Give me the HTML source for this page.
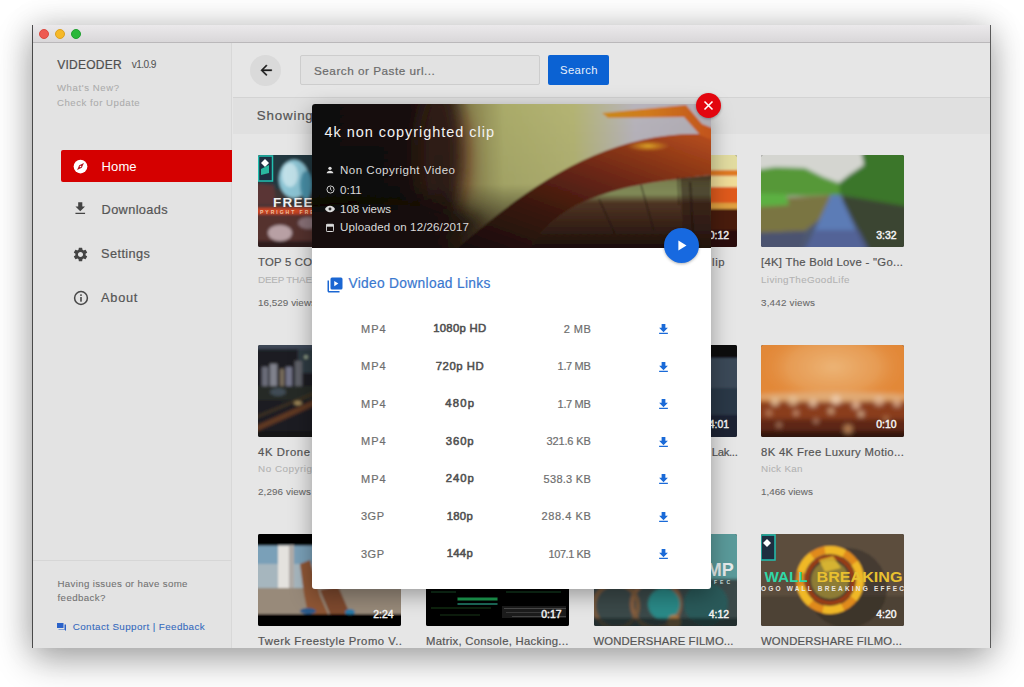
<!DOCTYPE html>
<html><head><meta charset="utf-8">
<style>
*{margin:0;padding:0;box-sizing:border-box}
html,body{width:1024px;height:687px;overflow:hidden;background:#fff;font-family:"Liberation Sans",sans-serif;position:relative}
div,svg{position:absolute}
.t{white-space:pre;line-height:1;-webkit-text-stroke:.2px currentColor}
.th{border-radius:2px;overflow:hidden;width:143px;height:92px}
</style></head><body>
<!-- window shadow -->
<div style="left:32px;top:25px;width:959px;height:623px;box-shadow:0 12px 34px rgba(0,0,0,.32),0 0 30px rgba(0,0,0,.14)"></div>
<!-- window base -->
<div style="left:32px;top:25px;width:959px;height:623px;background:#e6e6e6"></div>
<!-- title bar -->
<div style="left:32px;top:25px;width:959px;height:18px;background:linear-gradient(#ebe9eb,#d9d7d9);border-bottom:1px solid #bab8ba"></div>
<div style="left:38.8px;top:29.2px;width:10px;height:10px;border-radius:50%;background:#ee5a52;border:1px solid #dc4a40"></div>
<div style="left:54.8px;top:29.2px;width:10px;height:10px;border-radius:50%;background:#f6b928;border:1px solid #dca020"></div>
<div style="left:70.9px;top:29.2px;width:10px;height:10px;border-radius:50%;background:#2ab83a;border:1px solid #20a030"></div>
<div style="left:32px;top:25px;width:1px;height:623px;background:#4a4a4a"></div>
<div style="left:990px;top:25px;width:1px;height:623px;background:#5a5a5a"></div>

<!-- sidebar -->
<div style="left:33px;top:43px;width:199px;height:605px;background:#e3e3e3;border-right:1px solid #d8d8d8"></div>
<div style="left:33px;top:560px;width:198px;height:1px;background:#d6d6d6"></div>
<div style="left:61px;top:150px;width:171px;height:32px;background:#d50000;border-radius:2px 0 0 2px"></div>
<!-- nav icons -->
<svg style="left:73px;top:159px" width="15" height="15" viewBox="0 0 24 24"><circle cx="12" cy="12" r="11" fill="#fff"/><path d="M17.5 6.5 L14 14 L6.5 17.5 L10 10Z" fill="#b0101a"/><circle cx="12" cy="12" r="1.3" fill="#fff"/></svg>
<svg style="left:72.3px;top:199.5px" width="16.5" height="17" viewBox="0 0 24 24"><path d="M19 9h-4V3H9v6H5l7 7 7-7zM5 18v2h14v-2H5z" fill="#444"/></svg>
<svg style="left:72px;top:245.8px" width="17" height="17" viewBox="0 0 24 24"><path fill="#444" d="M19.14 12.94c.04-.3.06-.61.06-.94 0-.32-.02-.64-.07-.94l2.03-1.58a.49.49 0 0 0 .12-.61l-1.92-3.32a.488.488 0 0 0-.59-.22l-2.39.96c-.5-.38-1.03-.7-1.62-.94l-.36-2.54a.484.484 0 0 0-.48-.41h-3.84c-.24 0-.43.17-.47.41l-.36 2.54c-.59.24-1.13.57-1.62.94l-2.39-.96c-.22-.08-.47 0-.59.22L2.74 8.87c-.12.21-.08.47.12.61l2.03 1.58c-.05.3-.09.63-.09.94s.02.64.07.94l-2.03 1.58a.49.49 0 0 0-.12.61l1.92 3.32c.12.22.37.29.59.22l2.39-.96c.5.38 1.03.7 1.62.94l.36 2.54c.05.24.24.41.48.41h3.84c.24 0 .44-.17.47-.41l.36-2.54c.59-.24 1.13-.56 1.62-.94l2.39.96c.22.08.47 0 .59-.22l1.92-3.32c.12-.22.07-.47-.12-.61l-2.01-1.58zM12 15.6c-1.98 0-3.6-1.62-3.6-3.6s1.62-3.6 3.6-3.6 3.6 1.62 3.6 3.6-1.62 3.6-3.6 3.6z"/></svg>
<svg style="left:72.5px;top:290.3px" width="16" height="16" viewBox="0 0 24 24"><circle cx="12" cy="12" r="9.6" fill="none" stroke="#484848" stroke-width="2.3"/><rect x="10.8" y="10.5" width="2.4" height="7" fill="#484848"/><rect x="10.8" y="6.5" width="2.4" height="2.4" fill="#484848"/></svg>
<svg style="left:57px;top:623px" width="9" height="8" viewBox="0 0 18 16"><rect x="0" y="0" width="13" height="10" fill="#2a62c9"/><path d="M3 12h12V3h3v13l-3-3H3z" fill="#2a62c9"/></svg>

<!-- main header -->
<div style="left:233px;top:97px;width:757px;height:1px;background:#d3d3d3"></div>
<div style="left:233px;top:98px;width:757px;height:36px;background:#e0e0e0"></div>
<div style="left:250px;top:55px;width:31px;height:31px;border-radius:50%;background:#dadada"></div>
<svg style="left:257.8px;top:61.6px" width="16.5" height="16.5" viewBox="0 0 24 24"><path d="M20 11H7.83l5.59-5.59L12 4l-8 8 8 8 1.41-1.41L7.83 13H20v-2z" fill="#1e1e1e" stroke="#1e1e1e" stroke-width=".5"/></svg>
<div style="left:300px;top:55px;width:240px;height:30px;background:#e2e2e2;border:1px solid #cdcdcd;border-radius:2px"></div>
<div style="left:548px;top:55px;width:61px;height:30px;background:#0b62d3;border-radius:2px"></div>

<!-- thumbnails -->
<div class="th" style="left:258px;top:155px;background:#222"><svg style="left:0;top:0" width="143" height="92" viewBox="0 0 143 92"><defs><filter id="F0" x="-10%" y="-10%" width="120%" height="120%"><feGaussianBlur stdDeviation="1.6"/></filter></defs><g filter="url(#F0)">
<rect x="-5" y="-5" width="153" height="102" fill="#243840"/>
<rect x="-5" y="34" width="153" height="20" fill="#3a3436"/>
<rect x="-5" y="56" width="153" height="40" fill="#54302e"/>
<path d="M-5 28 L16 30 L18 50 L-5 50Z" fill="#5a3434"/>
<ellipse cx="36" cy="24" rx="15" ry="19" fill="#8cc4d4"/>
<ellipse cx="32" cy="20" rx="8" ry="12" fill="#c0e0e8"/>
<ellipse cx="48" cy="30" rx="6" ry="14" fill="#4a90a8"/>
<ellipse cx="22" cy="78" rx="12" ry="8" fill="#b8a0a4"/>
<ellipse cx="50" cy="68" rx="10" ry="6" fill="#8a7278"/>
<rect x="-5" y="53" width="153" height="6" fill="#cc4424"/>
<rect x="-5" y="86" width="153" height="10" fill="#2e1c1c"/>
</g><rect x="0.5" y="1" width="14" height="25" fill="#1e2e40" stroke="#22c0b0" stroke-width="1.5"/>
<path d="M3 8 L7 4 L11 8 L7 12Z" fill="#fff"/><path d="M3 14 L11 10 L11 18 L3 20Z" fill="#2ab8a0"/>
<text x="15" y="52" font-family="Liberation Sans" font-weight="700" font-size="13.5" fill="#f0f0f0" letter-spacing="1.2">FREE</text>
<text x="2" y="58.5" font-family="Liberation Sans" font-weight="700" font-size="5" fill="#f0c0a0" letter-spacing="2">PYRIGHT FREE</text></svg></div>
<div class="th" style="left:593.5px;top:155px;background:#222"><svg style="left:0;top:0" width="143" height="92" viewBox="0 0 143 92"><defs><filter id="F1" x="-10%" y="-10%" width="120%" height="120%"><feGaussianBlur stdDeviation="0.8"/></filter></defs><g filter="url(#F1)">
<rect x="-5" y="-5" width="153" height="102" fill="#3a1a0e"/>
<rect x="-5" y="-5" width="153" height="20" fill="#e2dca0"/>
<rect x="-5" y="15" width="153" height="6" fill="#e07a20"/>
<rect x="-5" y="21" width="153" height="11" fill="#f0dc98"/>
<rect x="-5" y="32" width="153" height="16" fill="#e05a1c"/>
<rect x="-5" y="48" width="153" height="6" fill="#e0a040"/>
<rect x="-5" y="54" width="153" height="40" fill="#4a1e10"/>
<rect x="-5" y="75" width="153" height="20" fill="#2a1008"/>
</g></svg></div>
<div class="th" style="left:761px;top:155px;background:#222"><svg style="left:0;top:0" width="143" height="92" viewBox="0 0 143 92"><defs><filter id="F2" x="-10%" y="-10%" width="120%" height="120%"><feGaussianBlur stdDeviation="2.0"/></filter></defs><g filter="url(#F2)">
<rect x="-5" y="-5" width="153" height="102" fill="#4e5872"/>
<rect x="-5" y="-5" width="153" height="50" fill="#d4d5d0"/>
<path d="M-5 15 L14 12 L44 13 L62 22 L78 28 L80 40 L-5 42Z" fill="#569838"/>
<path d="M100 -5 L150 -5 L150 54 L79 40 L78 28 L88 20 L103 10Z" fill="#3a762a"/>
<path d="M-5 44 L70 40 L62 62 L44 76 L-5 78Z" fill="#7a7442"/>
<path d="M-5 38 L25 39 L28 50 L-5 52Z" fill="#5cb042"/>
<path d="M70 40 L79 40 L104 96 L44 96Z" fill="#5c7cb6"/>
<path d="M55 75 L100 75 L108 96 L40 96Z" fill="#4e5a8a" opacity=".7"/>
<path d="M79 40 L150 52 L150 96 L109 96Z" fill="#3a4430"/>
<path d="M-5 78 L44 76 L38 96 L-5 96Z" fill="#4c5270"/>
</g></svg></div>
<div class="th" style="left:258px;top:344.5px;background:#222"><svg style="left:0;top:0" width="143" height="92" viewBox="0 0 143 92"><defs><filter id="F3" x="-10%" y="-10%" width="120%" height="120%"><feGaussianBlur stdDeviation="1.4"/></filter></defs><g filter="url(#F3)">
<rect x="-5" y="-5" width="153" height="102" fill="#1c1e22"/>
<rect x="-5" y="-5" width="153" height="9" fill="#3e4656"/>
<rect x="40" y="4" width="18" height="24" fill="#2e3a42"/>
<circle cx="48" cy="12" r="1.5" fill="#c0d0b0"/>
<rect x="4" y="22" width="6" height="19" fill="#6a6c78"/>
<rect x="12" y="19" width="7" height="22" fill="#80828c"/>
<rect x="22" y="24" width="4" height="17" fill="#7a6e5e"/>
<rect x="28" y="22" width="6" height="19" fill="#74768a"/>
<rect x="37" y="16" width="7" height="25" fill="#5e6068"/>
<rect x="-5" y="41" width="153" height="14" fill="#262c26"/>
<ellipse cx="20" cy="47" rx="8" ry="4" fill="#4a5a6a" opacity=".7"/>
<path d="M-5 82 L58 54 L58 60 L-5 88Z" fill="#5e3820"/>
<path d="M-5 72 L58 46 L58 49 L-5 75Z" fill="#3e3224"/>
<ellipse cx="40" cy="58" rx="4" ry="2" fill="#a08858"/>
<rect x="-5" y="86" width="153" height="10" fill="#141414"/>
</g></svg></div>
<div class="th" style="left:593.5px;top:344.5px;background:#222"><svg style="left:0;top:0" width="143" height="92" viewBox="0 0 143 92"><defs><filter id="F4" x="-10%" y="-10%" width="120%" height="120%"><feGaussianBlur stdDeviation="0.8"/></filter></defs><g filter="url(#F4)">
<rect x="-5" y="-5" width="153" height="102" fill="#2c3846"/>
<rect x="-5" y="-5" width="153" height="18" fill="#0a0a0a"/>
<rect x="-5" y="13" width="153" height="30" fill="#3a4858"/>
<rect x="-5" y="70" width="153" height="26" fill="#1c2430"/>
</g></svg></div>
<div class="th" style="left:761px;top:344.5px;background:#222"><svg style="left:0;top:0" width="143" height="92" viewBox="0 0 143 92"><defs><filter id="F5" x="-10%" y="-10%" width="120%" height="120%"><feGaussianBlur stdDeviation="2.4"/></filter></defs><g filter="url(#F5)">
<rect x="-5" y="-5" width="153" height="102" fill="#e28838"/>
<radialGradient id="bkg"><stop offset="0" stop-color="#ecb476"/><stop offset=".6" stop-color="#e8a460" stop-opacity=".7"/><stop offset="1" stop-color="#e28838" stop-opacity="0"/></radialGradient><ellipse cx="72" cy="22" rx="75" ry="42" fill="url(#bkg)"/>
<rect x="-5" y="56" width="153" height="45" fill="#8a3e1c"/>
<rect x="-5" y="74" width="153" height="28" fill="#5e2814"/>
<rect x="-5" y="86" width="153" height="12" fill="#2e140c"/>
<ellipse cx="72" cy="52" rx="78" ry="5" fill="#e0b080" opacity=".8"/>
<circle cx="14" cy="57" r="4" fill="#e8c8a0" opacity=".8"/>
<circle cx="32" cy="56" r="5" fill="#e8c8a0" opacity=".7"/>
<circle cx="52" cy="58" r="4" fill="#e8c8a8" opacity=".8"/>
<circle cx="75" cy="55" r="5" fill="#f0d0b0" opacity=".8"/>
<circle cx="95" cy="60" r="4" fill="#e8c0a0" opacity=".8"/>
<circle cx="118" cy="56" r="5" fill="#e8c0a0" opacity=".7"/>
<circle cx="136" cy="58" r="4" fill="#e8c0a0" opacity=".7"/>
<circle cx="35" cy="68" r="2.5" fill="#e0b090" opacity=".8"/>
<circle cx="100" cy="69" r="3" fill="#e0c0a0" opacity=".8"/>
<circle cx="87" cy="84" r="4.5" fill="#c89060" opacity=".8"/>
<circle cx="18" cy="80" r="2.5" fill="#d0a080" opacity=".7"/>
<circle cx="55" cy="76" r="2.5" fill="#d0a080" opacity=".7"/>
<circle cx="125" cy="74" r="3" fill="#c89060" opacity=".6"/>
<circle cx="70" cy="66" r="3" fill="#e8c8a0" opacity=".7"/>
<circle cx="8" cy="68" r="3" fill="#d8a880" opacity=".6"/>
</g></svg></div>
<div class="th" style="left:258px;top:534px;background:#222"><svg style="left:0;top:0" width="143" height="92" viewBox="0 0 143 92"><defs><filter id="F6" x="-10%" y="-10%" width="120%" height="120%"><feGaussianBlur stdDeviation="1.0"/></filter></defs><g filter="url(#F6)">
<rect x="-5" y="-5" width="153" height="102" fill="#000"/>
<rect x="-5" y="11.5" width="153" height="44" fill="#7aa0b8"/>
<rect x="-5" y="30" width="153" height="25" fill="#a6b6be"/>
<rect x="20" y="11.5" width="16" height="48" fill="#e4e2de"/>
<rect x="31" y="11.5" width="5" height="48" fill="#b0aca8"/>
<rect x="-5" y="54" width="153" height="26" fill="#988a7a"/>
<path d="M42 30 L52 26 L62 62 L70 80 L50 80 L46 60Z" fill="#8e5634"/>
<path d="M62 56 L80 52 L92 80 L72 80Z" fill="#7e4a2e"/>
<ellipse cx="50" cy="77" rx="8" ry="3" fill="#2a5a8a"/>
<ellipse cx="92" cy="78" rx="5" ry="3" fill="#2a7aa8"/>
<rect x="-5" y="80.5" width="153" height="16" fill="#000"/>
</g></svg></div>
<div class="th" style="left:426px;top:534px;background:#222"><svg style="left:0;top:0" width="143" height="92" viewBox="0 0 143 92"><defs><filter id="F7" x="-10%" y="-10%" width="120%" height="120%"><feGaussianBlur stdDeviation="0.4"/></filter></defs><g filter="url(#F7)">
<rect x="-5" y="-5" width="153" height="102" fill="#030503"/>
<rect x="31.5" y="63.5" width="40" height="3" fill="#1e9a50"/>
<rect x="31.5" y="69" width="40" height="2" fill="#1a6a58"/>
<rect x="5" y="57" width="25" height="2" fill="#0e2a14"/>
<rect x="80" y="57" width="55" height="2" fill="#0e2a14"/>
<rect x="5" y="73" width="60" height="2" fill="#0c2210"/>
<rect x="76" y="72" width="64" height="12" fill="#1c1c1c"/><rect x="78" y="74" width="62" height="1" fill="#4a4a4a"/>
<rect x="80" y="78" width="50" height="1" fill="#3a3a3a"/>
<rect x="86" y="82" width="54" height="1" fill="#444"/>
<rect x="14" y="80" width="40" height="2" fill="#0c1e10"/>
</g></svg></div>
<div class="th" style="left:593.5px;top:534px;background:#222"><svg style="left:0;top:0" width="143" height="92" viewBox="0 0 143 92"><defs><filter id="F8" x="-10%" y="-10%" width="120%" height="120%"><feGaussianBlur stdDeviation="1.8"/></filter></defs><g filter="url(#F8)">
<rect x="-5" y="-5" width="153" height="102" fill="#3a4848"/>
<rect x="115" y="-5" width="35" height="50" fill="#5a9a9a"/>
<circle cx="62" cy="70" r="24" fill="none" stroke="#8a6040" stroke-width="4"/>
<circle cx="70" cy="70" r="16" fill="#2a8a88"/>
<circle cx="22" cy="72" r="22" fill="none" stroke="#7a5a3a" stroke-width="4"/>
<circle cx="112" cy="70" r="22" fill="#2a5a5a"/>
<circle cx="80" cy="88" r="7" fill="#b07a40"/>
<rect x="-5" y="84" width="153" height="12" fill="#1a2222" opacity=".7"/>
</g><text x="139.8" y="42" text-anchor="end" font-family="Liberation Sans" font-weight="700" font-size="18" fill="#e6ecec">MP</text><text x="139" y="50" text-anchor="end" font-family="Liberation Sans" font-weight="700" font-size="5" fill="#d0e0e0" letter-spacing="3">FEC</text></svg></div>
<div class="th" style="left:761px;top:534px;background:#222"><svg style="left:0;top:0" width="143" height="92" viewBox="0 0 143 92"><defs><filter id="F9" x="-10%" y="-10%" width="120%" height="120%"><feGaussianBlur stdDeviation="1.2"/></filter></defs><g filter="url(#F9)">
<rect x="-5" y="-5" width="153" height="102" fill="#5c4e3e"/>
<rect x="-5" y="62" width="153" height="40" fill="#4e4234"/>
<ellipse cx="86" cy="54" rx="40" ry="40" fill="#2e2822" opacity=".5"/>
<circle cx="69" cy="46" r="30" fill="none" stroke="#e08a1e" stroke-width="8"/>
<circle cx="69" cy="46" r="30" fill="none" stroke="#f0b828" stroke-width="8" stroke-dasharray="20 14"/>
<circle cx="69" cy="46" r="23" fill="none" stroke="#9a3e16" stroke-width="4"/>
<circle cx="69" cy="46" r="19" fill="#8e7c36"/>
<path d="M58 26 L72 22 L80 34 L64 38Z" fill="#e8c030" opacity=".8"/>
</g><rect x="0" y="1" width="14" height="25" fill="#1e2e40" stroke="#22c0b0" stroke-width="1.5"/>
<path d="M2 9 L6 5 L10 9 L6 13Z" fill="#fff"/>
<text x="3.5" y="48" font-family="Liberation Sans" font-weight="700" font-size="14.5" fill="#30d8a8" textLength="43" lengthAdjust="spacingAndGlyphs">WALL</text>
<text x="55.5" y="48" font-family="Liberation Sans" font-weight="700" font-size="14.5" fill="#e8c030" textLength="86" lengthAdjust="spacingAndGlyphs">BREAKING</text>
<text x="0" y="56.5" font-family="Liberation Sans" font-weight="700" font-size="6.5" fill="#e8e4e0" textLength="143" lengthAdjust="spacing">OGO WALL BREAKING EFFEC</text></svg></div>


<div class="t" style="left:57.30px;top:58.57px;font-size:12.03px;color:#4f4f4f;letter-spacing:0.233px">VIDEODER</div>
<div class="t" style="left:131.80px;top:60.38px;font-size:10.14px;color:#555;letter-spacing:-0.619px;-webkit-text-stroke:.08px currentColor">v1.0.9</div>
<div class="t" style="left:57.00px;top:83.47px;font-size:9.57px;color:#acacac;letter-spacing:0.597px;-webkit-text-stroke:.08px currentColor">What&#x27;s New?</div>
<div class="t" style="left:57.00px;top:97.57px;font-size:9.57px;color:#acacac;letter-spacing:0.552px;-webkit-text-stroke:.08px currentColor">Check for Update</div>
<div class="t" style="left:101.60px;top:159.72px;font-size:13.04px;color:#ffffff;letter-spacing:0.078px;-webkit-text-stroke:0">Home</div>
<div class="t" style="left:101.60px;top:203.76px;font-size:12.75px;color:#555;letter-spacing:0.365px">Downloads</div>
<div class="t" style="left:101.00px;top:248.16px;font-size:12.75px;color:#555;letter-spacing:0.417px">Settings</div>
<div class="t" style="left:101.00px;top:292.26px;font-size:12.75px;color:#555;letter-spacing:0.768px">About</div>
<div class="t" style="left:57.50px;top:578.65px;font-size:9.71px;color:#727272;letter-spacing:0.324px;-webkit-text-stroke:.08px currentColor">Having issues or have some</div>
<div class="t" style="left:57.50px;top:592.55px;font-size:9.71px;color:#727272;letter-spacing:0.402px;-webkit-text-stroke:.08px currentColor">feedback?</div>
<div class="t" style="left:72.70px;top:621.82px;font-size:9.86px;color:#3569bd;letter-spacing:0.384px;-webkit-text-stroke:.08px currentColor">Contact Support | Feedback</div>
<div class="t" style="left:314.00px;top:65.02px;font-size:11.74px;color:#6b6b6b;letter-spacing:0.503px">Search or Paste url...</div>
<div class="t" style="left:560.00px;top:64.89px;font-size:11.3px;color:#e9f0fb;letter-spacing:0.361px;-webkit-text-stroke:0">Search</div>
<div class="t" style="left:256.80px;top:109.27px;font-size:13.33px;color:#555;letter-spacing:0.810px">Showing</div>
<div class="t" style="left:258.00px;top:257.39px;font-size:11.3px;color:#555;letter-spacing:0.239px">TOP 5 COPYRIGHT FREE...</div>
<div class="t" style="left:258.00px;top:274.62px;font-size:9.86px;color:#b3b3b3;letter-spacing:-0.182px;-webkit-text-stroke:.08px currentColor">DEEP THAEKA</div>
<div class="t" style="left:258.00px;top:297.62px;font-size:9.86px;color:#686868;letter-spacing:0.045px;-webkit-text-stroke:.08px currentColor">16,529 views</div>
<div class="t" style="left:708.80px;top:230.63px;font-size:10.43px;color:#f4f4f4;-webkit-text-stroke:0;-webkit-text-stroke:.45px #f4f4f4">0:12</div>
<div class="t" style="left:761.00px;top:257.39px;font-size:11.3px;color:#555;letter-spacing:0.291px">[4K] The Bold Love - &quot;Go...</div>
<div class="t" style="left:761.00px;top:274.62px;font-size:9.86px;color:#b3b3b3;letter-spacing:0.366px;-webkit-text-stroke:.08px currentColor">LivingTheGoodLife</div>
<div class="t" style="left:761.00px;top:297.62px;font-size:9.86px;color:#686868;letter-spacing:0.202px;-webkit-text-stroke:.08px currentColor">3,442 views</div>
<div class="t" style="left:876.30px;top:230.63px;font-size:10.43px;color:#f4f4f4;-webkit-text-stroke:0;-webkit-text-stroke:.45px #f4f4f4">3:32</div>
<div class="t" style="left:258.00px;top:446.89px;font-size:11.3px;color:#555;letter-spacing:0.609px">4K Drone Footage - Ho...</div>
<div class="t" style="left:258.00px;top:464.12px;font-size:9.86px;color:#b3b3b3;letter-spacing:0.528px;-webkit-text-stroke:.08px currentColor">No Copyright Video</div>
<div class="t" style="left:258.00px;top:487.12px;font-size:9.86px;color:#686868;letter-spacing:0.102px;-webkit-text-stroke:.08px currentColor">2,296 views</div>
<div class="t" style="left:708.80px;top:420.13px;font-size:10.43px;color:#f4f4f4;-webkit-text-stroke:0;-webkit-text-stroke:.45px #f4f4f4">4:01</div>
<div class="t" style="left:761.00px;top:446.89px;font-size:11.3px;color:#555;letter-spacing:0.345px">8K 4K Free Luxury Motio...</div>
<div class="t" style="left:761.00px;top:464.12px;font-size:9.86px;color:#b3b3b3;letter-spacing:0.301px;-webkit-text-stroke:.08px currentColor">Nick Kan</div>
<div class="t" style="left:761.00px;top:487.12px;font-size:9.86px;color:#686868;letter-spacing:-0.018px;-webkit-text-stroke:.08px currentColor">1,466 views</div>
<div class="t" style="left:876.30px;top:420.13px;font-size:10.43px;color:#f4f4f4;-webkit-text-stroke:0;-webkit-text-stroke:.45px #f4f4f4">0:10</div>
<div class="t" style="left:258.00px;top:636.39px;font-size:11.3px;color:#555;letter-spacing:0.497px">Twerk Freestyle Promo V..</div>
<div class="t" style="left:373.30px;top:609.63px;font-size:10.43px;color:#f4f4f4;-webkit-text-stroke:0;-webkit-text-stroke:.45px #f4f4f4">2:24</div>
<div class="t" style="left:426.00px;top:636.39px;font-size:11.3px;color:#555;letter-spacing:0.281px">Matrix, Console, Hacking...</div>
<div class="t" style="left:541.30px;top:609.63px;font-size:10.43px;color:#f4f4f4;-webkit-text-stroke:0;-webkit-text-stroke:.45px #f4f4f4">0:17</div>
<div class="t" style="left:593.50px;top:636.39px;font-size:11.3px;color:#555;letter-spacing:0.133px">WONDERSHARE FILMO...</div>
<div class="t" style="left:708.80px;top:609.63px;font-size:10.43px;color:#f4f4f4;-webkit-text-stroke:0;-webkit-text-stroke:.45px #f4f4f4">4:12</div>
<div class="t" style="left:761.00px;top:636.39px;font-size:11.3px;color:#555;letter-spacing:0.186px">WONDERSHARE FILMO...</div>
<div class="t" style="left:876.30px;top:609.63px;font-size:10.43px;color:#f4f4f4;-webkit-text-stroke:0;-webkit-text-stroke:.45px #f4f4f4">4:20</div>
<div class="t" style="left:712.00px;top:257.39px;font-size:11.3px;color:#555;letter-spacing:0.644px">lip</div>
<div class="t" style="left:711.80px;top:446.89px;font-size:11.3px;color:#555;letter-spacing:-0.328px">Lak...</div>

<!-- modal -->
<div style="left:312px;top:104px;width:399px;height:485px;background:#fff;border-radius:3px;box-shadow:0 6px 22px rgba(0,0,0,.35);overflow:hidden">
<svg style="left:0;top:0" width="399" height="144" viewBox="0 0 399 144">
<defs>
<linearGradient id="sky" x1="0" y1="0" x2="1" y2="0"><stop offset="0" stop-color="#110b09"/><stop offset=".22" stop-color="#130c0a"/><stop offset=".32" stop-color="#2a1a10"/><stop offset=".4" stop-color="#8a8450"/><stop offset=".48" stop-color="#aaab6a"/><stop offset=".65" stop-color="#b4b474"/><stop offset=".8" stop-color="#b8b4bc"/><stop offset="1" stop-color="#b0acb4"/></linearGradient>
<linearGradient id="skyv" x1="0" y1="0" x2="0" y2="1"><stop offset="0" stop-color="#000" stop-opacity="0"/><stop offset=".55" stop-color="#000" stop-opacity="0.05"/><stop offset=".8" stop-color="#1a0c08" stop-opacity=".6"/><stop offset="1" stop-color="#140a08" stop-opacity=".9"/></linearGradient>
<linearGradient id="tire" x1="0.1" y1="1" x2="0.9" y2="0"><stop offset="0" stop-color="#160c0a"/><stop offset=".35" stop-color="#3a1810"/><stop offset=".65" stop-color="#6e2814"/><stop offset="1" stop-color="#b04a1c"/></linearGradient>
<linearGradient id="inside" x1="0" y1="0" x2="0" y2="1"><stop offset="0" stop-color="#5a3a22"/><stop offset=".1" stop-color="#7a8050"/><stop offset=".25" stop-color="#808a58"/><stop offset=".36" stop-color="#4e3424"/><stop offset=".6" stop-color="#3a2418"/><stop offset="1" stop-color="#140a08"/></linearGradient>
<radialGradient id="sun" cx="0.5" cy="0.5" r="0.5"><stop offset="0" stop-color="#e8b828" stop-opacity=".85"/><stop offset="1" stop-color="#e0a020" stop-opacity="0"/></radialGradient>
<linearGradient id="fend" x1="0" y1="0" x2="1" y2="0"><stop offset="0" stop-color="#c88a20"/><stop offset=".4" stop-color="#d07a1c"/><stop offset="1" stop-color="#c0501a"/></linearGradient>
<filter id="bl" x="-20%" y="-20%" width="140%" height="140%"><feGaussianBlur stdDeviation="1"/></filter>
<filter id="bl8" x="-80%" y="-80%" width="260%" height="260%"><feGaussianBlur stdDeviation="8"/></filter>
</defs>
<g filter="url(#bl)">
<rect x="-5" y="-5" width="410" height="155" fill="url(#sky)"/>
<ellipse cx="150" cy="55" rx="10" ry="48" fill="#8a5a36" opacity=".75" filter="url(#bl8)"/><ellipse cx="128" cy="50" rx="22" ry="66" fill="#2e1c12" filter="url(#bl8)"/><ellipse cx="60" cy="120" rx="110" ry="20" fill="#140c0a" opacity=".8" filter="url(#bl8)"/>
<rect x="-5" y="-5" width="410" height="155" fill="url(#skyv)"/>
<path d="M217 150 L217 145 C255.6 82.2 339.3 78.6 405 70 L405 150Z" fill="url(#inside)"/>
<path d="M140 150 L145 145 C217.4 79.8 302.5 21.4 405 31 L405 70 C339.3 78.6 255.6 82.2 217 145 L214 150Z" fill="url(#tire)"/>
<ellipse cx="336" cy="42" rx="22" ry="5.5" fill="url(#sun)"/>
<path d="M290 9 L374 1 L390 20 L405 26 L405 38 L388 31 L372 13 L296 14Z" fill="url(#fend)"/>
<path d="M368 74 L399 72 L399 145 L372 145Z" fill="#2a1812" opacity=".55"/><path d="M378 78 L382 145" stroke="#1e120e" stroke-width="2" opacity=".6"/>
<path d="M287 95 L303 130 M329 81 L342 127 M366 73 L367 101" stroke="#1a100c" stroke-width="1.1" opacity=".7"/>
</g>
</svg>
</div>
<svg style="left:325.5px;top:275.8px" width="18" height="18" viewBox="0 0 24 24"><path d="M4 6H2v14c0 1.1.9 2 2 2h14v-2H4V6z" fill="#1a66d2"/><rect x="6" y="2" width="16" height="16" rx="2" fill="#1a66d2"/><path d="M11 6.5v7l5.5-3.5z" fill="#fff"/></svg>
<svg style="left:659px;top:324.0px" width="9" height="10" viewBox="0 0 14 16"><path d="M4 0h6v6h4l-7 7-7-7h4z" fill="#1a6ad8"/><rect x="0" y="14" width="14" height="2" fill="#1a6ad8"/></svg>
<svg style="left:659px;top:361.5px" width="9" height="10" viewBox="0 0 14 16"><path d="M4 0h6v6h4l-7 7-7-7h4z" fill="#1a6ad8"/><rect x="0" y="14" width="14" height="2" fill="#1a6ad8"/></svg>
<svg style="left:659px;top:399.0px" width="9" height="10" viewBox="0 0 14 16"><path d="M4 0h6v6h4l-7 7-7-7h4z" fill="#1a6ad8"/><rect x="0" y="14" width="14" height="2" fill="#1a6ad8"/></svg>
<svg style="left:659px;top:436.5px" width="9" height="10" viewBox="0 0 14 16"><path d="M4 0h6v6h4l-7 7-7-7h4z" fill="#1a6ad8"/><rect x="0" y="14" width="14" height="2" fill="#1a6ad8"/></svg>
<svg style="left:659px;top:474.0px" width="9" height="10" viewBox="0 0 14 16"><path d="M4 0h6v6h4l-7 7-7-7h4z" fill="#1a6ad8"/><rect x="0" y="14" width="14" height="2" fill="#1a6ad8"/></svg>
<svg style="left:659px;top:511.5px" width="9" height="10" viewBox="0 0 14 16"><path d="M4 0h6v6h4l-7 7-7-7h4z" fill="#1a6ad8"/><rect x="0" y="14" width="14" height="2" fill="#1a6ad8"/></svg>
<svg style="left:659px;top:549.0px" width="9" height="10" viewBox="0 0 14 16"><path d="M4 0h6v6h4l-7 7-7-7h4z" fill="#1a6ad8"/><rect x="0" y="14" width="14" height="2" fill="#1a6ad8"/></svg>
<svg style="left:326px;top:166px" width="8" height="8" viewBox="0 0 24 24"><circle cx="12" cy="7" r="5" fill="#ddd"/><path d="M2 22c0-5 5-8 10-8s10 3 10 8z" fill="#ddd"/></svg>
<svg style="left:325.5px;top:185px" width="9" height="9" viewBox="0 0 24 24"><circle cx="12" cy="12" r="9.5" fill="none" stroke="#ddd" stroke-width="2.5"/><path d="M12 6v6l4 3" fill="none" stroke="#ddd" stroke-width="2.2"/></svg>
<svg style="left:325px;top:205px" width="10" height="8" viewBox="0 0 24 18"><path d="M12 1C6 1 2 5 0 9c2 4 6 8 12 8s10-4 12-8c-2-4-6-8-12-8z" fill="#ddd"/><circle cx="12" cy="9" r="3.5" fill="#333"/></svg>
<svg style="left:326px;top:223px" width="8" height="9" viewBox="0 0 20 22"><rect x="1" y="3" width="18" height="18" rx="2" fill="none" stroke="#ddd" stroke-width="2.5"/><rect x="1" y="3" width="18" height="6" fill="#ddd"/></svg>

<div style="left:664px;top:228px;width:35px;height:35px;border-radius:50%;background:#1769e0;box-shadow:0 1px 3px rgba(0,0,0,.3)"></div>
<svg style="left:674px;top:238px" width="15" height="15" viewBox="0 0 24 24"><path d="M7 4v16l13-8z" fill="#fff"/></svg>
<div style="left:696px;top:93px;width:25px;height:25px;border-radius:50%;background:#e3060f;box-shadow:0 1px 3px rgba(0,0,0,.3)"></div>
<svg style="left:703px;top:100px" width="11" height="11" viewBox="0 0 11 11"><path d="M1.5 1.5L9.5 9.5M9.5 1.5L1.5 9.5" stroke="#fff" stroke-width="1.6"/></svg>
<div class="t" style="left:324.60px;top:124.58px;font-size:14.49px;color:#f2f2f2;letter-spacing:0.966px;-webkit-text-stroke:0">4k non copyrighted clip</div>
<div class="t" style="left:340.00px;top:164.55px;font-size:11.59px;color:#dadada;letter-spacing:0.464px;-webkit-text-stroke:0">Non Copyright Video</div>
<div class="t" style="left:340.00px;top:184.55px;font-size:11.59px;color:#dadada;-webkit-text-stroke:0">0:11</div>
<div class="t" style="left:340.00px;top:203.75px;font-size:11.59px;color:#dadada;letter-spacing:-0.062px;-webkit-text-stroke:0">108 views</div>
<div class="t" style="left:340.00px;top:222.35px;font-size:11.59px;color:#dadada;letter-spacing:0.103px;-webkit-text-stroke:0">Uploaded on 12/26/2017</div>
<div class="t" style="left:348.40px;top:277.10px;font-size:13.77px;color:#3a78cf;letter-spacing:0.317px">Video Download Links</div>
<div class="t" style="left:361.00px;top:323.54px;font-size:11.01px;color:#6e6e6e;letter-spacing:0.988px">MP4</div>
<div class="t" style="left:433.20px;top:323.29px;font-size:11.3px;color:#505050;letter-spacing:0.304px;-webkit-text-stroke:.55px #505050">1080p HD</div>
<div class="t" style="left:563.80px;top:323.54px;font-size:11.01px;color:#6e6e6e;letter-spacing:0.438px">2 MB</div>
<div class="t" style="left:361.00px;top:361.04px;font-size:11.01px;color:#6e6e6e;letter-spacing:0.988px">MP4</div>
<div class="t" style="left:435.70px;top:360.79px;font-size:11.3px;color:#505050;letter-spacing:0.568px;-webkit-text-stroke:.55px #505050">720p HD</div>
<div class="t" style="left:557.60px;top:361.04px;font-size:11.01px;color:#6e6e6e;letter-spacing:-0.332px">1.7 MB</div>
<div class="t" style="left:361.00px;top:398.54px;font-size:11.01px;color:#6e6e6e;letter-spacing:0.988px">MP4</div>
<div class="t" style="left:445.35px;top:398.29px;font-size:11.3px;color:#505050;letter-spacing:1.186px;-webkit-text-stroke:.55px #505050">480p</div>
<div class="t" style="left:557.60px;top:398.54px;font-size:11.01px;color:#6e6e6e;letter-spacing:-0.332px">1.7 MB</div>
<div class="t" style="left:361.00px;top:436.04px;font-size:11.01px;color:#6e6e6e;letter-spacing:0.988px">MP4</div>
<div class="t" style="left:445.75px;top:435.79px;font-size:11.3px;color:#505050;letter-spacing:0.920px;-webkit-text-stroke:.55px #505050">360p</div>
<div class="t" style="left:546.50px;top:436.04px;font-size:11.01px;color:#6e6e6e;letter-spacing:-0.138px">321.6 KB</div>
<div class="t" style="left:361.00px;top:473.54px;font-size:11.01px;color:#6e6e6e;letter-spacing:0.988px">MP4</div>
<div class="t" style="left:445.70px;top:473.29px;font-size:11.3px;color:#505050;letter-spacing:0.953px;-webkit-text-stroke:.55px #505050">240p</div>
<div class="t" style="left:543.60px;top:473.54px;font-size:11.01px;color:#6e6e6e;letter-spacing:0.276px">538.3 KB</div>
<div class="t" style="left:361.00px;top:511.04px;font-size:11.01px;color:#6e6e6e;letter-spacing:0.492px">3GP</div>
<div class="t" style="left:446.70px;top:510.79px;font-size:11.3px;color:#505050;letter-spacing:0.286px;-webkit-text-stroke:.55px #505050">180p</div>
<div class="t" style="left:541.50px;top:511.04px;font-size:11.01px;color:#6e6e6e;letter-spacing:0.576px">288.4 KB</div>
<div class="t" style="left:361.00px;top:548.54px;font-size:11.01px;color:#6e6e6e;letter-spacing:0.492px">3GP</div>
<div class="t" style="left:446.70px;top:548.29px;font-size:11.3px;color:#505050;letter-spacing:0.286px;-webkit-text-stroke:.55px #505050">144p</div>
<div class="t" style="left:548.50px;top:548.54px;font-size:11.01px;color:#6e6e6e;letter-spacing:-0.424px">107.1 KB</div>
</body></html>
